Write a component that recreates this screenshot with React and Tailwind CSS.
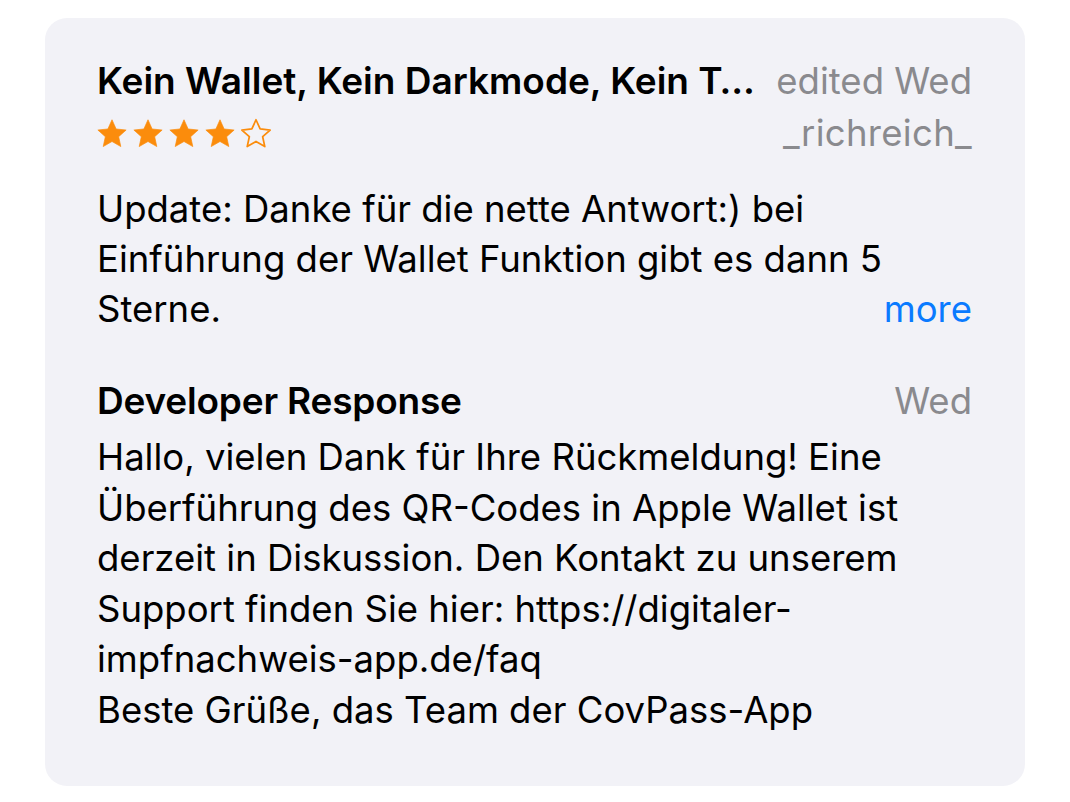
import React from "react";

function Star({ filled }) {
  return (
    <svg width="32" height="31" viewBox="0 0 24 23" className="shrink-0">
      <path
        d="M12 1.2l3.1 6.9 7.5.8-5.6 5 1.6 7.4L12 17.5l-6.6 3.8 1.6-7.4-5.6-5 7.5-.8z"
        fill={filled ? "#fb8c0c" : "none"}
        stroke="#fb8c0c"
        strokeWidth={filled ? 0.5 : 1.3}
        strokeLinejoin="round"
      />
    </svg>
  );
}

export default function App() {
  return (
    <div
      className="min-h-screen bg-white pt-[18px] px-[45px]"
      style={{ fontFamily: "Inter, 'Noto Sans', sans-serif" }}
    >
      <div className="w-[980px] rounded-[22px] bg-[#f2f2f7] pl-[52px] pr-[53px] pt-[41px] pb-[51px] text-black">
        <div className="flex h-[44px] items-center justify-between">
          <div className="text-[37px] font-semibold leading-[44px] whitespace-nowrap">
            Kein Wallet, Kein Darkmode, Kein T…
          </div>
          <div className="text-[36.5px] leading-[44px] text-[#8a8a8e] whitespace-nowrap">
            edited Wed
          </div>
        </div>
        <div className="flex h-[60px] items-center justify-between">
          <div className="-ml-[1px] flex items-center gap-[4px]">
            <Star filled />
            <Star filled />
            <Star filled />
            <Star filled />
            <Star />
          </div>
          <div className="text-[36.5px] leading-[44px] text-[#8a8a8e] tracking-[0.3px]">_richreich_</div>
        </div>
        <div className="mt-[21px] text-[36.5px] leading-[50px]">
          <div>Update: Danke für die nette Antwort:) bei</div>
          <div>Einführung der Wallet Funktion gibt es dann 5</div>
          <div className="flex justify-between">
            <span>Sterne.</span>
            <span className="text-[#0a7aff]">more</span>
          </div>
        </div>
        <div className="mt-[42px] flex h-[56px] items-start justify-between">
          <div className="text-[37px] font-semibold leading-[50px] tracking-[-0.2px]">Developer Response</div>
          <div className="text-[36.5px] leading-[50px] text-[#8a8a8e]">Wed</div>
        </div>
        <div className="text-[36.5px] leading-[50.5px]">
          <div>Hallo, vielen Dank für Ihre Rückmeldung! Eine</div>
          <div>Überführung des QR-Codes in Apple Wallet ist</div>
          <div>derzeit in Diskussion. Den Kontakt zu unserem</div>
          <div>Support finden Sie hier: https://digitaler-</div>
          <div>impfnachweis-app.de/faq</div>
          <div>Beste Grüße, das Team der CovPass-App</div>
        </div>
      </div>
    </div>
  );
}
